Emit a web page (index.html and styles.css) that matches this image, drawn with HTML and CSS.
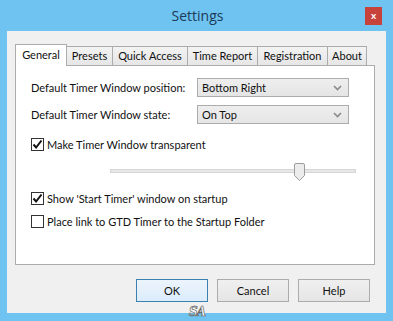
FILE: index.html
```html
<!DOCTYPE html>
<html lang="en">
<head>
	<meta charset="utf-8">
	<title>Settings</title>
	<link rel="stylesheet" href="styles.css">
</head>
<body>
	<div class="window">
		<div class="titlebar">
			<span></span>
			<span class="title">Settings</span>
			<span class="close">x</span>
		</div>
		<div class="client">
			<div class="tabs">
				<div class="tab active">General</div>
				<div class="tab">Presets</div>
				<div class="tab">Quick Access</div>
				<div class="tab">Time Report</div>
				<div class="tab">Registration</div>
				<div class="tab">About</div>
			</div>
			<div class="panel">
				<div class="row">
					<span class="label">Default Timer Window position:</span>
					<div class="select">Bottom Right<svg class="arrow" width="9" height="6" viewBox="0 0 9 6"><path d="M1 1l3.5 3.5L8 1" fill="none" stroke="#8a8a8a" stroke-width="1.6"/></svg></div>
				</div>
				<div class="row">
					<span class="label">Default Timer Window state:</span>
					<div class="select">On Top<svg class="arrow" width="9" height="6" viewBox="0 0 9 6"><path d="M1 1l3.5 3.5L8 1" fill="none" stroke="#8a8a8a" stroke-width="1.6"/></svg></div>
				</div>
				<label class="check first"><span class="box"><svg width="11" height="11" viewBox="0 0 11 11"><path d="M1.5 5.5l2.6 3L9.5 1.5" fill="none" stroke="#111" stroke-width="2"/></svg></span>Make Timer Window transparent</label>
				<div class="slider">
					<div class="track"></div>
					<svg class="thumb" width="11" height="18" viewBox="0 0 11 18"><path d="M0.5 2a1.5 1.5 0 0 1 1.5-1.5h7a1.5 1.5 0 0 1 1.5 1.5v10.5l-5 5l-5-5z" fill="#ececec" stroke="#9c9c9c"/></svg>
				</div>
				<label class="check"><span class="box"><svg width="11" height="11" viewBox="0 0 11 11"><path d="M1.5 5.5l2.6 3L9.5 1.5" fill="none" stroke="#111" stroke-width="2"/></svg></span>Show 'Start Timer' window on startup</label>
				<label class="check last"><span class="box"></span>Place link to GTD Timer to the Startup Folder</label>
			</div>
			<div class="buttons">
				<div class="btn default">OK</div>
				<div class="btn">Cancel</div>
				<div class="btn">Help</div>
			</div>
			<span class="mark">SA</span>
		</div>
	</div>
</body>
</html>
```

FILE: styles.css
```css
* {
	margin: 0;
	padding: 0;
	box-sizing: border-box;
}

body {
	font-family: 'Lato', 'Liberation Sans', sans-serif;
	font-size: 11px;
	color: #111;
	width: 393px;
	height: 321px;
	overflow: hidden;
	white-space: nowrap;
}

/* window frame */
.window {
	width: 393px;
	height: 321px;
	background: #6ec3f0;
	display: flex;
	flex-direction: column;
}

.titlebar {
	height: 31px;
	display: grid;
	grid-template-columns: 1fr auto 1fr;
	align-items: center;
}

.title {
	font-family: 'Open Sans', sans-serif;
	font-size: 14px;
	color: #1c3a58;
	padding-bottom: 1px;
	padding-left: 2px;
}

.close {
	justify-self: end;
	margin-right: 11px;
	width: 17px;
	height: 18px;
	background: #c8423c;
	color: #fff;
	font-weight: bold;
	font-size: 10px;
	text-align: center;
	line-height: 16px;
}

.client {
	position: relative;
	margin: 0 7px 8px 7px;
	flex: 1;
	background: #f0f0f0;
	padding: 13px 11px 0 8px;
}

/* tabs */
.tabs {
	display: flex;
	align-items: flex-end;
	height: 21px;
}

.tab {
	height: 19px;
	border: 1px solid #acacac;
	border-bottom: none;
	border-left: none;
	background: linear-gradient(#f3f3f3, #e6e6e6);
	line-height: 18px;
	text-align: center;
}

.tab.active {
	height: 22px;
	margin-bottom: -1px;
	background: #fff;
	border-left: 1px solid #acacac;
	line-height: 20px;
	position: relative;
	z-index: 1;
}

.tab:nth-child(2) { width: 46px; }
.tab:nth-child(3) { width: 75px; }
.tab:nth-child(4) { width: 70px; }
.tab:nth-child(5) { width: 70px; }
.tab:nth-child(6) { width: 39px; }
.tab.active { width: 52px; }

.panel {
	height: 200px;
	background: #fff;
	border: 1px solid #acacac;
	padding: 12px 0 0 15px;
}

.row {
	display: flex;
	align-items: center;
	height: 19px;
	margin-bottom: 8px;
}

.label {
	width: 166px;
	flex-shrink: 0;
}

.select {
	width: 152px;
	flex-shrink: 0;
	height: 19px;
	border: 1px solid #acacac;
	background: linear-gradient(#eeeeee, #e5e5e5);
	padding: 0 6px 0 4px;
	display: flex;
	align-items: center;
	justify-content: space-between;
	line-height: 17px;
}

.check {
	display: flex;
	align-items: center;
	height: 13px;
	margin-top: 10px;
}

.check.first {
	margin-top: 14px;
}

.check.last {
	margin-top: 10px;
}

.box {
	width: 13px;
	height: 13px;
	border: 1px solid #333;
	background: #fff;
	margin-right: 3px;
	display: flex;
	align-items: center;
	justify-content: center;
	flex-shrink: 0;
}

.slider {
	position: relative;
	height: 18px;
	margin: 11px 0 12px 79px;
	width: 246px;
}

.track {
	position: absolute;
	left: 0;
	right: 0;
	top: 7px;
	height: 4px;
	background: #e7e7e7;
	border: 1px solid #d6d6d6;
}

.thumb {
	position: absolute;
	left: 184px;
	top: 1px;
}

/* bottom buttons */
.buttons {
	display: flex;
	justify-content: flex-end;
	gap: 9px;
	margin-top: 14px;
	padding-right: 5px;
}

.btn {
	width: 72px;
	height: 23px;
	border: 1px solid #acacac;
	background: linear-gradient(#f0f0f0, #e5e5e5);
	text-align: center;
	line-height: 21px;
}

.btn.default {
	border-color: #3c7fb1;
	background: linear-gradient(#ecf4fc, #dcecfc);
}

.mark {
	position: absolute;
	left: 182px;
	top: 274px;
	font-family: 'DejaVu Serif', serif;
	font-style: italic;
	font-weight: bold;
	font-size: 12px;
	color: #f4f4f4;
	-webkit-text-stroke: 0.7px #6a6a6a;
	letter-spacing: -1px;
}
```
